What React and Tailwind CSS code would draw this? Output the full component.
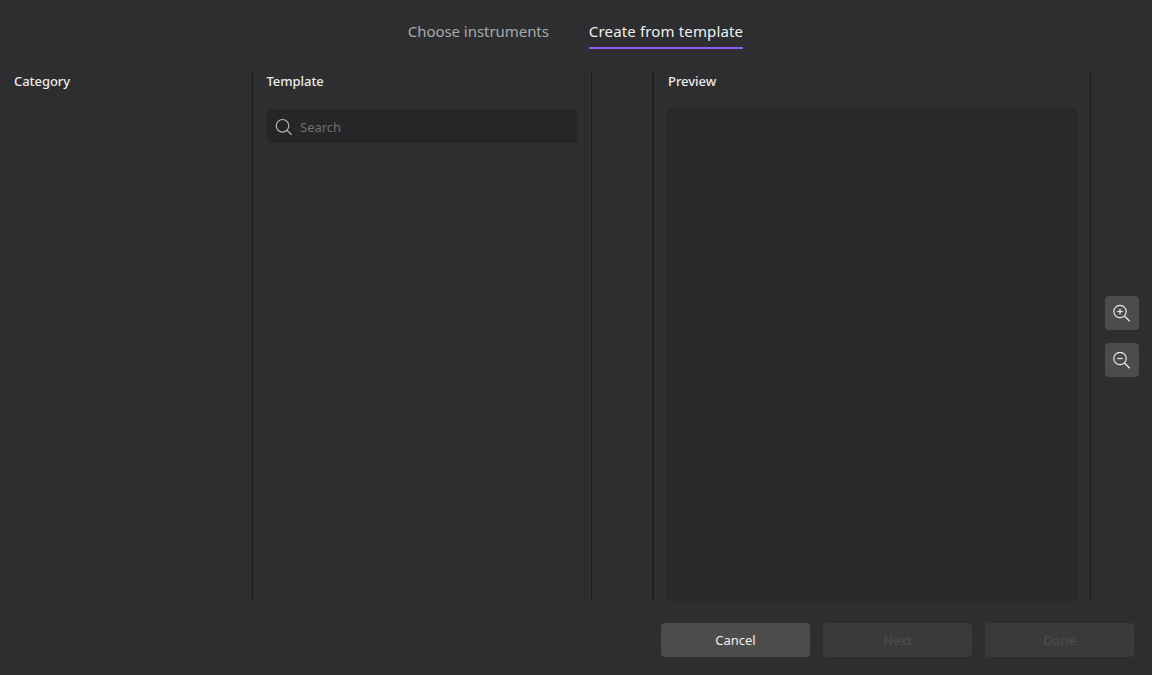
import React from "react";

const Zoom = ({ plus }) => (
  <button className="w-[34px] h-[34px] rounded-[4px] bg-[#4c4c4d] flex items-center justify-center text-[#e8e8e8]">
    <svg width="20" height="20" viewBox="0 0 20 20" fill="none" stroke="currentColor" strokeWidth="1.2">
      <circle cx="8" cy="8.5" r="6.2" />
      <path d="M12.5 13l5.2 5.2" strokeWidth="1.4" />
      <path d="M5.3 8.5h5.4" />
      {plus && <path d="M8 5.8v5.4" />}
    </svg>
  </button>
);

const Btn = ({ children, on }) => (
  <button className={`w-[149px] h-[34px] rounded-[4px] text-[13px] leading-[33px] text-center ${on ? "bg-[#4c4c4d] text-[#f0f0f0]" : "bg-[#3a3a3b] text-[#4e4e4f]"}`}>
    {children}
  </button>
);

export default function App() {
  return (
    <div className="w-[1152px] h-[675px] overflow-hidden bg-[#2e2e30] flex flex-col font-['Noto_Sans',sans-serif]">
      <div className="h-[71px] flex justify-center gap-10 pt-[15px] pr-[1px] text-[15px] leading-[32px]">
        <div className="h-[34px] text-[#a9a9aa] tracking-[-0.05px]">Choose instruments</div>
        <div className="h-[34px] text-[#f0f0f0] tracking-[0.15px] border-b-2 border-[#8b5cf6]">Create from template</div>
      </div>
      <div className="h-[530px] flex">
        <div className="w-[253px] border-r border-[#1f1f20] pl-[14px] text-[13px] leading-[21px] font-medium tracking-[-0.05px] text-[#ececec]">Category</div>
        <div className="w-[339px] border-r border-[#1f1f20] pl-[14px] pr-[14px]">
          <div className="-ml-[0.5px] text-[13px] leading-[21px] font-medium tracking-[-0.05px] text-[#ececec]">Template</div>
          <div className="mt-[17px] h-[34px] w-[310px] rounded-[4px] bg-[#262628] flex items-center pl-[8px] gap-[6px] text-[13px] text-[#6f6f70]">
            <svg width="19" height="19" viewBox="0 0 19 19" fill="none" stroke="#b5b5b5" strokeWidth="1.2">
              <circle cx="7.5" cy="8.8" r="6.3" />
              <path d="M12 13.3l4.6 4.4" />
            </svg>
            <span className="relative top-[1.5px]">Search</span>
          </div>
        </div>
        <div className="w-[60px]" />
        <div className="w-[439px] border-l-2 border-r border-l-[#1f1f20] border-r-[#1f1f20] pl-[13px] flex flex-col">
          <div className="pl-[1px] text-[13px] leading-[21px] font-medium tracking-[-0.05px] text-[#ececec]">Preview</div>
          <div className="mt-[17px] w-[410px] flex-1 bg-[#28282b]" />
        </div>
        <div className="flex-1 flex flex-col items-center justify-center gap-[13px] pl-[1px] pt-[1px]">
          <Zoom plus />
          <Zoom />
        </div>
      </div>
      <div className="flex justify-end gap-[13px] pt-[22px] pr-[18px]">
        <Btn on>Cancel</Btn>
        <Btn>Next</Btn>
        <Btn>Done</Btn>
      </div>
    </div>
  );
}
